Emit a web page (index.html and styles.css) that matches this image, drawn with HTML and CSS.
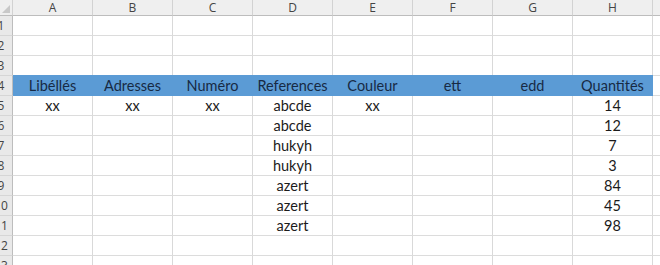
FILE: index.html
```html
<!DOCTYPE html>
<html lang="fr">
<head>
    <meta charset="UTF-8">
    <title>Classeur1 - Feuil1</title>
    <link rel="stylesheet" href="styles.css">
</head>
<body>
    <div class="sheet">
        <!-- column letters -->
        <div class="corner"></div>
        <div class="colhead">A</div>
        <div class="colhead">B</div>
        <div class="colhead">C</div>
        <div class="colhead">D</div>
        <div class="colhead">E</div>
        <div class="colhead">F</div>
        <div class="colhead">G</div>
        <div class="colhead">H</div>
        <div class="pad-head"></div>

        <div class="rowhead"><span>1</span></div>
        <div class="cell"></div><div class="cell"></div><div class="cell"></div><div class="cell"></div>
        <div class="cell"></div><div class="cell"></div><div class="cell"></div><div class="cell"></div>
        <div class="pad"></div>

        <div class="rowhead"><span>2</span></div>
        <div class="cell"></div><div class="cell"></div><div class="cell"></div><div class="cell"></div>
        <div class="cell"></div><div class="cell"></div><div class="cell"></div><div class="cell"></div>
        <div class="pad"></div>

        <div class="rowhead"><span>3</span></div>
        <div class="cell"></div><div class="cell"></div><div class="cell"></div><div class="cell"></div>
        <div class="cell"></div><div class="cell"></div><div class="cell"></div><div class="cell"></div>
        <div class="pad"></div>

        <div class="rowhead"><span>4</span></div>
        <div class="cell title">Libéllés</div>
        <div class="cell title">Adresses</div>
        <div class="cell title">Numéro</div>
        <div class="cell title">References</div>
        <div class="cell title">Couleur</div>
        <div class="cell title">ett</div>
        <div class="cell title">edd</div>
        <div class="cell title">Quantités</div>
        <div class="pad"></div>
    </div>
    <script>
        const rows = [
            ['xx', 'xx', 'xx', 'abcde', 'xx', '', '', '14'],
            ['', '', '', 'abcde', '', '', '', '12'],
            ['', '', '', 'hukyh', '', '', '', '7'],
            ['', '', '', 'hukyh', '', '', '', '3'],
            ['', '', '', 'azert', '', '', '', '84'],
            ['', '', '', 'azert', '', '', '', '45'],
            ['', '', '', 'azert', '', '', '', '98'],
            ['', '', '', '', '', '', '', ''],
            ['', '', '', '', '', '', '', '']
        ];
        const sheet = document.querySelector('.sheet');
        rows.forEach((row, i) => {
            let html = `<div class="rowhead"><span>${i + 5}</span></div>`;
            row.forEach(v => {
                html += `<div class="cell">${v}</div>`;
            });
            html += '<div class="pad"></div>';
            sheet.insertAdjacentHTML('beforeend', html);
        });
    </script>
</body>
</html>
```

FILE: styles.css
```css
html, body {
    margin: 0;
    padding: 0;
    background: #ffffff;
    overflow: hidden;
}
.sheet {
    display: grid;
    grid-template-columns: 13px repeat(8, 80px) 8px;
    grid-auto-rows: 20px;
    grid-template-rows: 16px;
    font-family: Lato, "Open Sans", sans-serif;
    font-size: 14.5px;
    color: #1b1b1b;
}
.corner,
.colhead,
.pad-head {
    background: #efefef;
    border-right: 1px solid #d2d2d2;
    border-bottom: 1px solid #bdbdbd;
    box-sizing: border-box;
}
.corner {
    position: relative;
}
.corner::after {
    content: "";
    position: absolute;
    right: 2px;
    bottom: 2px;
    border-left: 8px solid transparent;
    border-bottom: 8px solid #c8c8c8;
}
.pad-head {
    border-right: none;
}
.colhead {
    display: flex;
    align-items: center;
    justify-content: center;
    font-family: "Open Sans", sans-serif;
    font-size: 12px;
    color: #444444;
    line-height: 1;
}
.rowhead {
    background: #e9e9e9;
    border-right: 1px solid #bdbdbd;
    border-bottom: 1px solid #d6d6d6;
    box-sizing: border-box;
    overflow: hidden;
    display: flex;
    align-items: center;
}
.rowhead span {
    flex: none;
    width: 28px;
    margin-left: -13px;
    text-align: center;
    font-family: "Open Sans", sans-serif;
    font-size: 12px;
    color: #444444;
}
.cell {
    border-right: 1px solid #d9d9d9;
    border-bottom: 1px solid #dcdcdc;
    box-sizing: border-box;
    display: flex;
    align-items: center;
    justify-content: center;
    white-space: nowrap;
}
.pad {
    border-bottom: 1px solid #dcdcdc;
    box-sizing: border-box;
}
.title {
    background: #5b9bd5;
    border-right-color: #5b9bd5;
    border-bottom-color: #5b9bd5;
    color: #172a44;
    margin-top: -1px;
}
```
